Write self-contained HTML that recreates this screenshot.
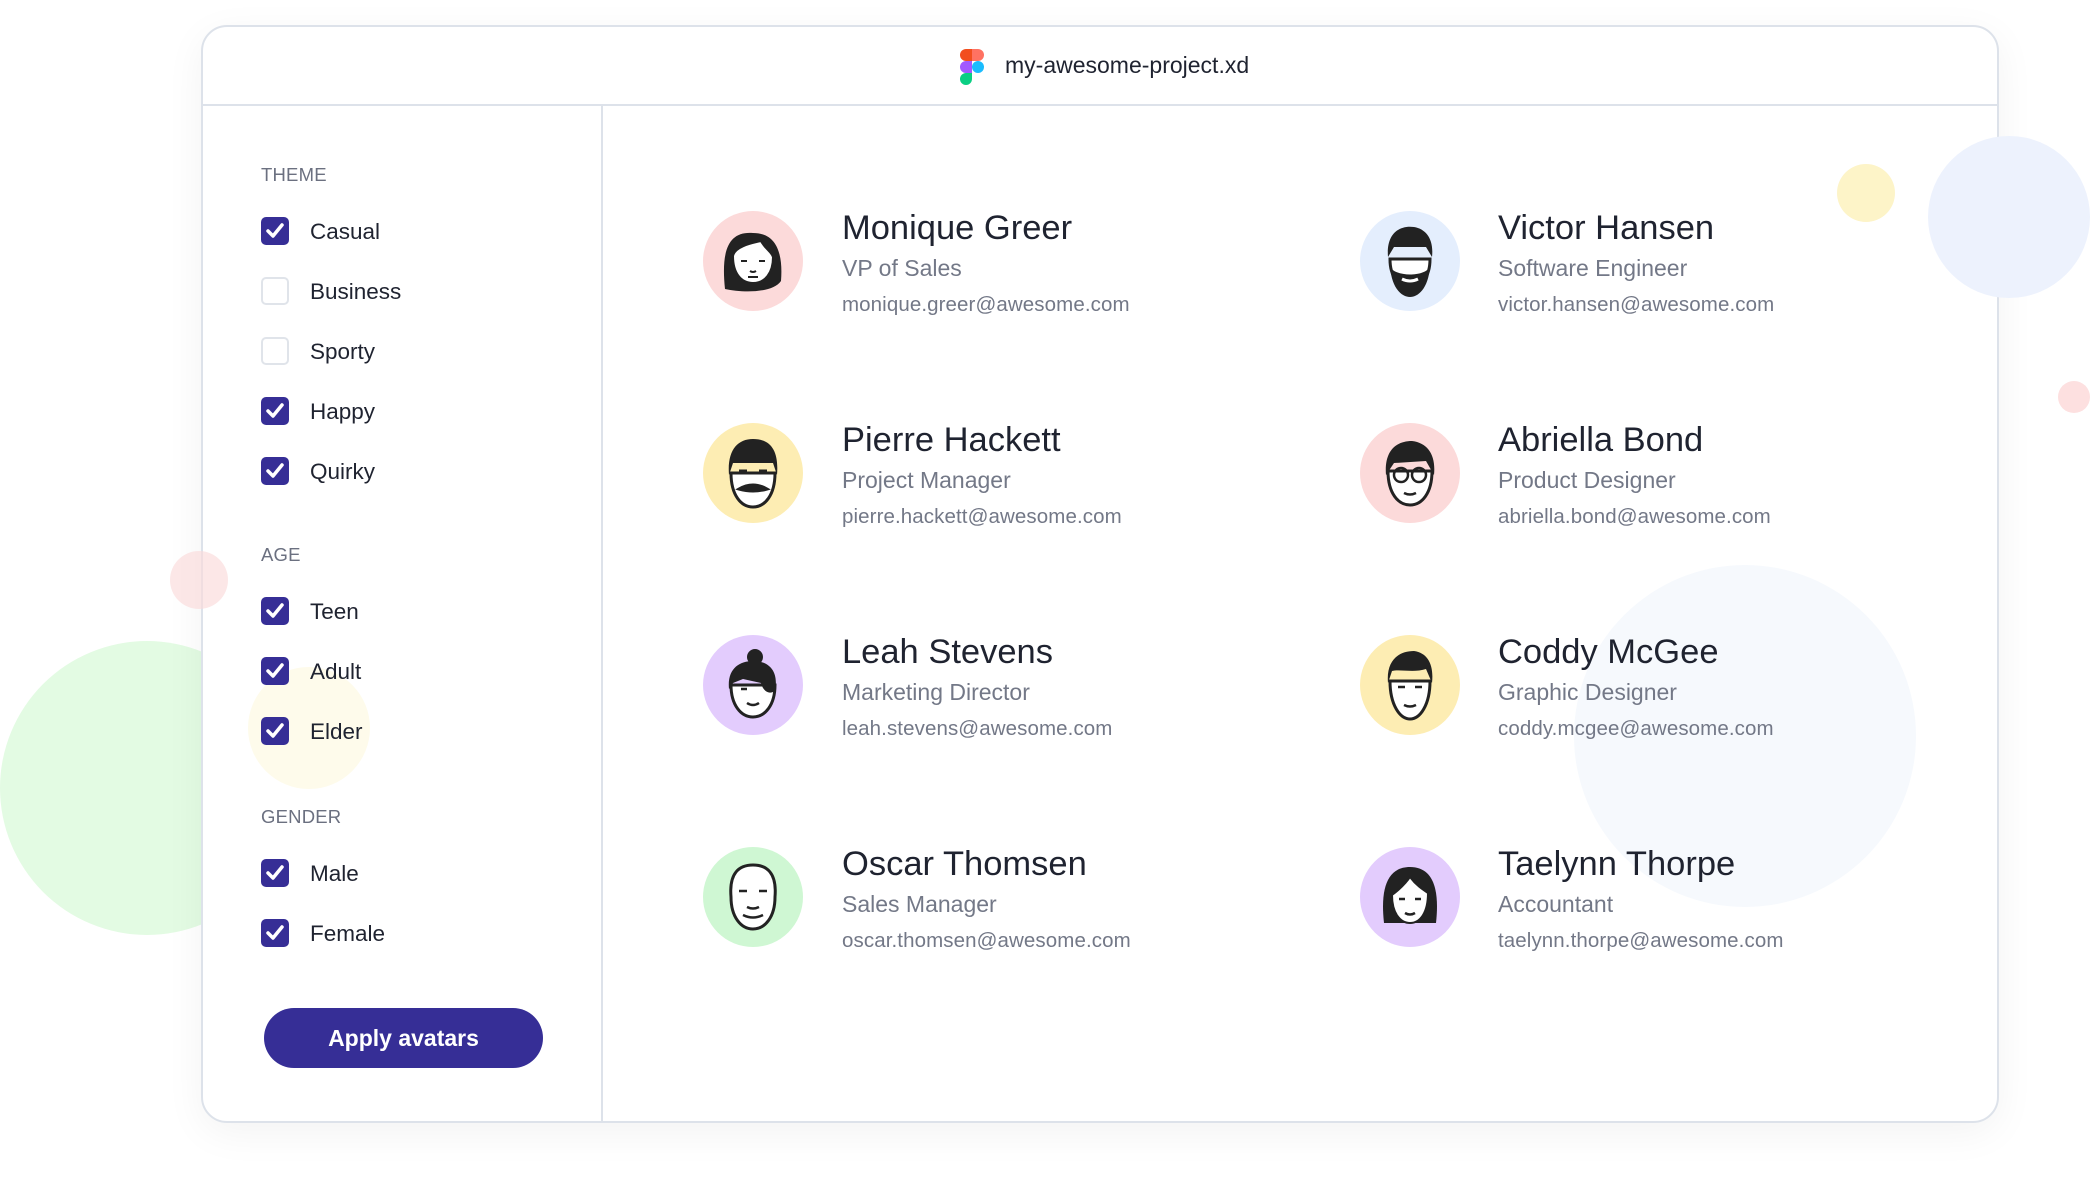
<!DOCTYPE html>
<html><head><meta charset="utf-8"><style>
*{box-sizing:border-box;margin:0;padding:0}
body{width:2092px;height:1190px;background:#fff;position:relative;overflow:hidden;font-family:"Liberation Sans",sans-serif}
.c{position:absolute;border-radius:50%}
.win{position:absolute;left:201px;top:25px;width:1798px;height:1098px;background:#fff;border:2px solid #dde2ea;border-radius:26px;box-shadow:0 10px 40px rgba(0,0,0,.05);overflow:hidden}
.hdr{position:absolute;left:0;top:0;right:0;height:79px;border-bottom:2px solid #dde2ea}
.title{position:absolute;left:802px;top:25px;font-size:23px;color:#1f2330}
.side{position:absolute;left:398px;top:79px;width:2px;bottom:0;background:#dde2ea}
.sec{position:absolute;left:58px;font-size:18.5px;color:#6b7080;letter-spacing:.2px}
.cb{position:absolute;left:58px;width:28px;height:28px;border-radius:5px;background:#362e96}
.cb.off{background:#fff;border:2px solid #e0e4ea}
.cb svg{position:absolute;left:5px;top:6px}
.lb{position:absolute;left:107px;font-size:22.5px;color:#1f2330}
.btn{position:absolute;left:61px;top:981px;width:279px;height:60px;border-radius:30px;background:#362e96;color:#fff;font-weight:bold;font-size:23px;text-align:center;line-height:60px}
.nm{position:absolute;font-size:34.5px;color:#1f2330}
.jb{position:absolute;font-size:23px;color:#737887}
.em{position:absolute;font-size:20.5px;color:#737887;letter-spacing:.1px}
.av{position:absolute;width:100px;height:100px}
</style></head><body>
<div class="c" style="left:0;top:641px;width:294px;height:294px;background:#e3fbe3"></div>
<div class="win">
<div class="c" style="left:1371px;top:538px;width:342px;height:342px;background:#f6f9fd"></div>
<div class="hdr">
<svg style="position:absolute;left:757px;top:22px" width="24" height="36" viewBox="0 0 24 36"><path d="M6 0h6v12H6A6 6 0 0 1 6 0z" fill="#f24e1e"/><path d="M12 0h6a6 6 0 0 1 0 12h-6z" fill="#ff7262"/><path d="M6 12h6v12H6a6 6 0 0 1 0-12z" fill="#a259ff"/><circle cx="18" cy="18" r="6" fill="#1abcfe"/><path d="M6 24h6v6a6 6 0 1 1-6-6z" fill="#0acf83"/></svg>
<div class="title">my-awesome-project.xd</div>
</div>
<div class="side"></div>
<div class="c" style="left:45px;top:640px;width:122px;height:122px;background:#fefbeb"></div>

<div class="sec" style="top:137px">THEME</div>
<div class="cb" style="top:190px"><svg width="18" height="16"><path d="M2 8l5 5 9-11" stroke="#fff" stroke-width="3.5" fill="none" stroke-linecap="round" stroke-linejoin="round"/></svg></div><div class="lb" style="top:192px">Casual</div>
<div class="cb off" style="top:250px"></div><div class="lb" style="top:252px">Business</div>
<div class="cb off" style="top:310px"></div><div class="lb" style="top:312px">Sporty</div>
<div class="cb" style="top:370px"><svg width="18" height="16"><path d="M2 8l5 5 9-11" stroke="#fff" stroke-width="3.5" fill="none" stroke-linecap="round" stroke-linejoin="round"/></svg></div><div class="lb" style="top:372px">Happy</div>
<div class="cb" style="top:430px"><svg width="18" height="16"><path d="M2 8l5 5 9-11" stroke="#fff" stroke-width="3.5" fill="none" stroke-linecap="round" stroke-linejoin="round"/></svg></div><div class="lb" style="top:432px">Quirky</div>

<div class="sec" style="top:517px">AGE</div>
<div class="cb" style="top:570px"><svg width="18" height="16"><path d="M2 8l5 5 9-11" stroke="#fff" stroke-width="3.5" fill="none" stroke-linecap="round" stroke-linejoin="round"/></svg></div><div class="lb" style="top:572px">Teen</div>
<div class="cb" style="top:630px"><svg width="18" height="16"><path d="M2 8l5 5 9-11" stroke="#fff" stroke-width="3.5" fill="none" stroke-linecap="round" stroke-linejoin="round"/></svg></div><div class="lb" style="top:632px">Adult</div>
<div class="cb" style="top:690px"><svg width="18" height="16"><path d="M2 8l5 5 9-11" stroke="#fff" stroke-width="3.5" fill="none" stroke-linecap="round" stroke-linejoin="round"/></svg></div><div class="lb" style="top:692px">Elder</div>

<div class="sec" style="top:779px">GENDER</div>
<div class="cb" style="top:832px"><svg width="18" height="16"><path d="M2 8l5 5 9-11" stroke="#fff" stroke-width="3.5" fill="none" stroke-linecap="round" stroke-linejoin="round"/></svg></div><div class="lb" style="top:834px">Male</div>
<div class="cb" style="top:892px"><svg width="18" height="16"><path d="M2 8l5 5 9-11" stroke="#fff" stroke-width="3.5" fill="none" stroke-linecap="round" stroke-linejoin="round"/></svg></div><div class="lb" style="top:894px">Female</div>

<div class="btn">Apply avatars</div>

<!-- column 1 -->
<svg class="av" style="left:500px;top:184px" viewBox="0 0 100 100"><circle cx="50" cy="50" r="50" fill="#fcdada"/><path d="M22 78 C18 40 25 20 50 22 C75 22 80 45 78 70 C70 82 40 82 22 78z" fill="#222"/><path d="M30 45 C32 35 50 32 58 30 C62 38 68 40 70 46 C70 62 62 72 50 72 C38 72 30 62 30 45z" fill="#fff" stroke="#222" stroke-width="2"/><path d="M38 50h6M56 50h6M47 60q3 2 6 0M45 66h10" stroke="#222" stroke-width="2" fill="none"/></svg>
<div class="nm" style="left:639px;top:182px">Monique Greer</div>
<div class="jb" style="left:639px;top:228px">VP of Sales</div>
<div class="em" style="left:639px;top:266px">monique.greer@awesome.com</div>

<svg class="av" style="left:500px;top:396px" viewBox="0 0 100 100"><circle cx="50" cy="50" r="50" fill="#fdedb3"/><path d="M28 50 C28 72 38 84 50 84 C62 84 72 72 72 50z" fill="#fff" stroke="#222" stroke-width="3"/><path d="M26 52 C24 28 34 16 50 16 C68 16 76 28 74 52 L70 40 L30 40z" fill="#222"/><path d="M36 48h8M56 48h8M36 66 q14 -8 28 0 q-14 4 -28 0z" stroke="#222" stroke-width="3" fill="#222"/></svg>
<div class="nm" style="left:639px;top:394px">Pierre Hackett</div>
<div class="jb" style="left:639px;top:440px">Project Manager</div>
<div class="em" style="left:639px;top:478px">pierre.hackett@awesome.com</div>

<svg class="av" style="left:500px;top:608px" viewBox="0 0 100 100"><circle cx="50" cy="50" r="50" fill="#e3ccfd"/><circle cx="52" cy="22" r="8" fill="#222"/><path d="M28 50 C28 70 38 82 50 82 C62 82 72 70 72 50z" fill="#fff" stroke="#222" stroke-width="3"/><path d="M26 54 C24 34 36 26 50 26 C66 26 76 36 72 56 C66 60 60 56 58 48 L40 44 L30 48z" fill="#222"/><path d="M38 54h6M44 68q6 4 12 0" stroke="#222" stroke-width="2.5" fill="none"/></svg>
<div class="nm" style="left:639px;top:606px">Leah Stevens</div>
<div class="jb" style="left:639px;top:652px">Marketing Director</div>
<div class="em" style="left:639px;top:690px">leah.stevens@awesome.com</div>

<svg class="av" style="left:500px;top:820px" viewBox="0 0 100 100"><circle cx="50" cy="50" r="50" fill="#cff7d3"/><path d="M28 50 C26 26 36 18 50 18 C64 18 74 26 72 50 C72 70 62 82 50 82 C38 82 28 70 28 50z" fill="#fff" stroke="#222" stroke-width="3"/><path d="M36 44h8M56 44h8M44 60q6 3 12 0M40 68q10 5 20 0" stroke="#222" stroke-width="2.5" fill="none"/></svg>
<div class="nm" style="left:639px;top:818px">Oscar Thomsen</div>
<div class="jb" style="left:639px;top:864px">Sales Manager</div>
<div class="em" style="left:639px;top:902px">oscar.thomsen@awesome.com</div>

<!-- column 2 -->
<svg class="av" style="left:1157px;top:184px" viewBox="0 0 100 100"><circle cx="50" cy="50" r="50" fill="#e4eefd"/><path d="M30 48 C30 66 38 74 50 74 C62 74 70 66 70 48z" fill="#fff" stroke="#222" stroke-width="3"/><path d="M28 46 C26 22 40 14 54 16 C66 18 74 28 72 46 L66 36 L34 36z" fill="#222"/><path d="M30 56 C32 78 42 86 50 86 C58 86 68 78 70 56 C64 66 36 66 30 56z" fill="#222"/><path d="M42 68q8 4 16 0" stroke="#fff" stroke-width="3" fill="none"/><path d="M38 48h6M56 48h6" stroke="#222" stroke-width="3"/></svg>
<div class="nm" style="left:1295px;top:182px">Victor Hansen</div>
<div class="jb" style="left:1295px;top:228px">Software Engineer</div>
<div class="em" style="left:1295px;top:266px">victor.hansen@awesome.com</div>

<svg class="av" style="left:1157px;top:396px" viewBox="0 0 100 100"><circle cx="50" cy="50" r="50" fill="#fcdada"/><path d="M28 48 C28 70 38 82 50 82 C62 82 72 70 72 48z" fill="#fff" stroke="#222" stroke-width="3"/><path d="M26 52 C24 28 36 18 52 18 C68 20 76 32 74 52 L66 38 L34 40z" fill="#222"/><circle cx="41" cy="52" r="7" fill="none" stroke="#222" stroke-width="2.5"/><circle cx="59" cy="52" r="7" fill="none" stroke="#222" stroke-width="2.5"/><path d="M44 70q6 3 12 0" stroke="#222" stroke-width="2.5" fill="none"/></svg>
<div class="nm" style="left:1295px;top:394px">Abriella Bond</div>
<div class="jb" style="left:1295px;top:440px">Product Designer</div>
<div class="em" style="left:1295px;top:478px">abriella.bond@awesome.com</div>

<svg class="av" style="left:1157px;top:608px" viewBox="0 0 100 100"><circle cx="50" cy="50" r="50" fill="#fdedb3"/><path d="M30 46 C30 70 40 84 50 84 C60 84 70 70 70 46z" fill="#fff" stroke="#222" stroke-width="3"/><path d="M28 48 C26 26 38 16 54 16 C68 18 74 30 72 48 L66 34 C54 38 40 34 32 36z" fill="#222"/><path d="M38 52h7M55 52h7M44 70q6 3 12 0" stroke="#222" stroke-width="2.5" fill="none"/></svg>
<div class="nm" style="left:1295px;top:606px">Coddy McGee</div>
<div class="jb" style="left:1295px;top:652px">Graphic Designer</div>
<div class="em" style="left:1295px;top:690px">coddy.mcgee@awesome.com</div>

<svg class="av" style="left:1157px;top:820px" viewBox="0 0 100 100"><circle cx="50" cy="50" r="50" fill="#e3ccfd"/><path d="M24 76 C20 40 28 20 50 20 C72 20 80 40 76 76z" fill="#222"/><path d="M32 48 C40 42 46 36 50 30 C56 38 62 42 68 46 C68 66 60 76 50 76 C40 76 32 66 32 48z" fill="#fff" stroke="#222" stroke-width="2"/><path d="M39 52h6M55 52h6M45 66q5 3 10 0" stroke="#222" stroke-width="2.5" fill="none"/></svg>
<div class="nm" style="left:1295px;top:818px">Taelynn Thorpe</div>
<div class="jb" style="left:1295px;top:864px">Accountant</div>
<div class="em" style="left:1295px;top:902px">taelynn.thorpe@awesome.com</div>
</div>
<div class="c" style="left:170px;top:551px;width:58px;height:58px;background:#fbdada;opacity:.65"></div>
<div class="c" style="left:1837px;top:164px;width:58px;height:58px;background:#fdf4c8"></div>
<div class="c" style="left:1928px;top:136px;width:162px;height:162px;background:#edf2fd"></div>
<div class="c" style="left:2058px;top:381px;width:32px;height:32px;background:#fde0e0"></div>
</body></html>
